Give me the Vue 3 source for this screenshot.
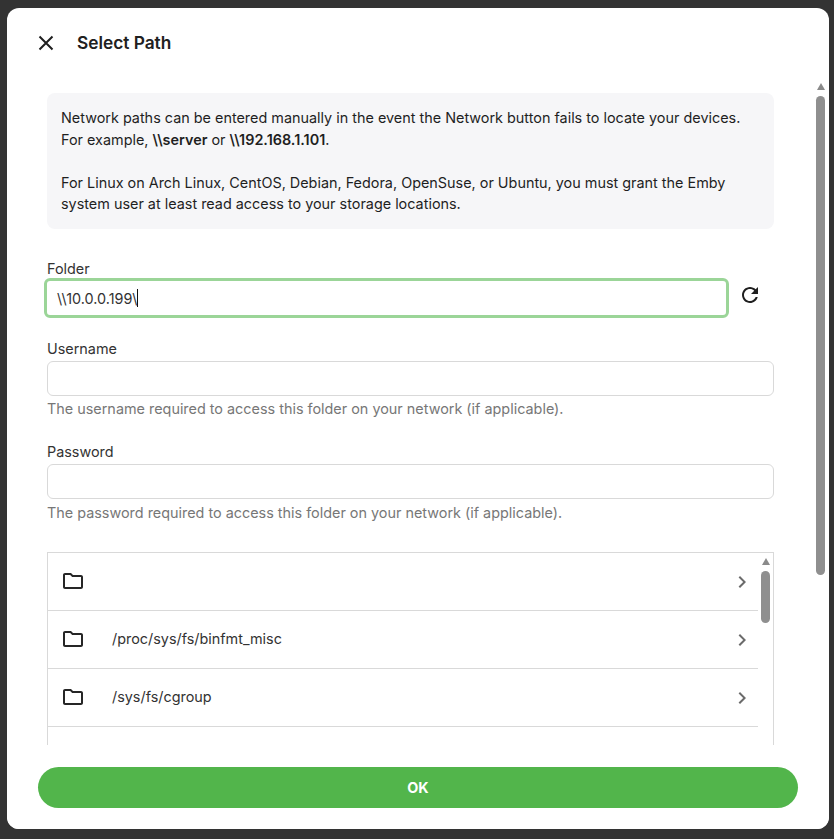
<script setup>
const rows = ['', '/proc/sys/fs/binfmt_misc', '/sys/fs/cgroup']
</script>

<template>
  <div class="backdrop">
    <div class="dialog">
      <header class="head">
        <button class="close" aria-label="Close">
          <svg width="24" height="24" viewBox="0 0 24 24"><path d="M5.500 5.500l13 13M18.500 5.500l-13 13" fill="none" stroke="#1f1f1f" stroke-width="2"/></svg>
        </button>
        <h1>Select Path</h1>
      </header>

      <div class="body">
        <div class="note">
          <p>Network paths can be entered manually in the event the Network button fails to locate your devices.<br>For example, <b>\\server</b> or <b>\\192.168.1.101</b>.</p>
          <p>For Linux on Arch Linux, CentOS, Debian, Fedora, OpenSuse, or Ubuntu, you must grant the Emby system user at least read access to your storage locations.</p>
        </div>

        <div class="field first">
          <label>Folder</label>
          <div class="folder-row">
            <div class="input focus">\\10.0.0.199\<span class="caret"></span></div>
            <svg class="refresh" width="24" height="24" viewBox="0 0 24 24"><path d="M17.650 6.350C16.200 4.900 14.210 4 12 4c-4.420 0-7.990 3.580-7.990 8s3.570 8 7.990 8c3.730 0 6.840-2.550 7.730-6h-2.080c-.82 2.330-3.040 4-5.650 4-3.310 0-6-2.690-6-6s2.690-6 6-6c1.660 0 3.140.69 4.220 1.780L13 11h7V4l-2.350 2.350z" fill="#1f1f1f"/></svg>
          </div>
        </div>

        <div class="field user">
          <label>Username</label>
          <div class="input"></div>
          <div class="hint">The username required to access this folder on your network (if applicable).</div>
        </div>

        <div class="field pass">
          <label>Password</label>
          <div class="input"></div>
          <div class="hint">The password required to access this folder on your network (if applicable).</div>
        </div>

        <div class="list">
          <div v-for="r in rows" :key="r" class="row">
            <svg class="folder" width="24" height="24" viewBox="0 0 24 24"><path d="M20 6h-8l-2-2H4c-1.100 0-2 .9-2 2v12c0 1.100.9 2 2 2h16c1.100 0 2-.9 2-2V8c0-1.100-.9-2-2-2zm0 12H4V6h5.170l2 2H20v10z" fill="#262626"/></svg>
            <span class="path">{{ r }}</span>
            <svg class="chev" width="24" height="24" viewBox="0 0 24 24"><path d="M10 6L8.590 7.410 13.170 12l-4.580 4.590L10 18l6-6z" fill="#6b6b6b"/></svg>
          </div>
          <div class="list-bar">
            <span class="arrow"></span>
            <span class="thumb small"></span>
          </div>
        </div>

        <div class="page-bar">
          <span class="arrow"></span>
          <span class="thumb large"></span>
        </div>
      </div>

      <footer class="foot">
        <button class="ok">OK</button>
      </footer>
    </div>
  </div>
</template>

<style>
html, body { margin: 0; background: #333; }
</style>

<style scoped>
.backdrop {
  width: 834px;
  height: 839px;
  background: #333;
  padding: 8px 5px 10px 7px;
  box-sizing: border-box;
  font-family: Inter, "Liberation Sans", sans-serif;
  color: #1f1f1f;
  overflow: hidden;
}
.dialog {
  height: 821px;
  background: #fff;
  border-radius: 12px;
  display: flex;
  flex-direction: column;
  overflow: hidden;
}
.head {
  height: 70px;
  flex: none;
  display: flex;
  align-items: center;
  padding-left: 27px;
  gap: 19px;
}
.close {
  width: 24px;
  height: 24px;
  padding: 0;
  border: 0;
  background: none;
  display: flex;
}
h1 {
  margin: 0 0 2px;
  font-size: 17.28px;
  font-weight: 600;
  color: #202020;
}
.body {
  flex: 1;
  position: relative;
  padding: 15px 55px 0 40px;
  overflow: hidden;
  min-height: 0;
}
.note {
  background: #f6f6f8;
  border-radius: 8px;
  padding: 14px;
  font-size: 14.4px;
  line-height: 21.6px;
  height: 136px;
  box-sizing: border-box;
}
.note p { margin: 0 0 21.6px; }
.note p:last-child { margin: 0; }
.note b { font-weight: 600; }
.field label {
  display: block;
  font-size: 14.4px;
  line-height: 20px;
  color: #333;
}
.first { margin-top: 30px; }
.user { margin-top: 21px; }
.pass { margin-top: 25px; }
.user label, .pass label { margin-bottom: 2px; }
.user .hint { margin-top: 4px; }
.folder-row {
  display: flex;
  align-items: center;
  gap: 9px;
  margin-top: -1px;
}
.input {
  height: 35px;
  box-sizing: border-box;
  border: 1px solid #d9d9d9;
  border-radius: 6px;
  font-size: 14.4px;
  color: #333;
}
.input.focus {
  flex: 1;
  height: 40px;
  margin-left: -3px;
  border: 3px solid #9bd598;
  padding-left: 10px;
  display: flex;
  align-items: center;
}
.caret {
  width: 1px;
  height: 18px;
  background: #111;
}
.refresh { margin-right: 12px; margin-bottom: 6px; }
.hint {
  margin-top: 5px;
  font-size: 14.4px;
  line-height: 17px;
  color: #777;
}
.list {
  position: relative;
  margin-top: 31px;
  border: 1px solid #d9d9d9;
  border-bottom: 0;
  height: 193px;
  overflow: hidden;
}
.row {
  height: 58px;
  box-sizing: border-box;
  margin-right: 15px;
  border-bottom: 1px solid #d9d9d9;
  display: flex;
  align-items: center;
  padding-left: 13px;
  font-size: 14.4px;
  color: #333;
}
.folder { margin-bottom: 2px; }
.path { margin-left: 27px; flex: 1; margin-bottom: 2px; }
.chev { margin-right: 4px; }
.list-bar, .page-bar {
  position: absolute;
  display: flex;
  flex-direction: column;
  align-items: center;
  width: 9px;
}
.list-bar { right: 3px; top: 5px; }
.page-bar { right: 4px; top: 5px; }
.arrow {
  width: 0;
  height: 0;
  border-left: 4.5px solid transparent;
  border-right: 4.5px solid transparent;
  border-bottom: 7px solid #8a8a8a;
}
.thumb {
  display: block;
  width: 9px;
  border-radius: 5px;
  background: #8f8f8f;
  margin-top: 6px;
}
.thumb.small { height: 52px; }
.thumb.large { height: 479px; }
.foot {
  height: 84px;
  flex: none;
  padding: 22px 31px 0;
  box-sizing: border-box;
  background: #fff;
}
.ok {
  display: block;
  width: 100%;
  height: 41px;
  border: 0;
  border-radius: 21px;
  background: #52b54b;
  color: #fff;
  font-family: inherit;
  font-size: 14.4px;
  font-weight: 700;
}
</style>
